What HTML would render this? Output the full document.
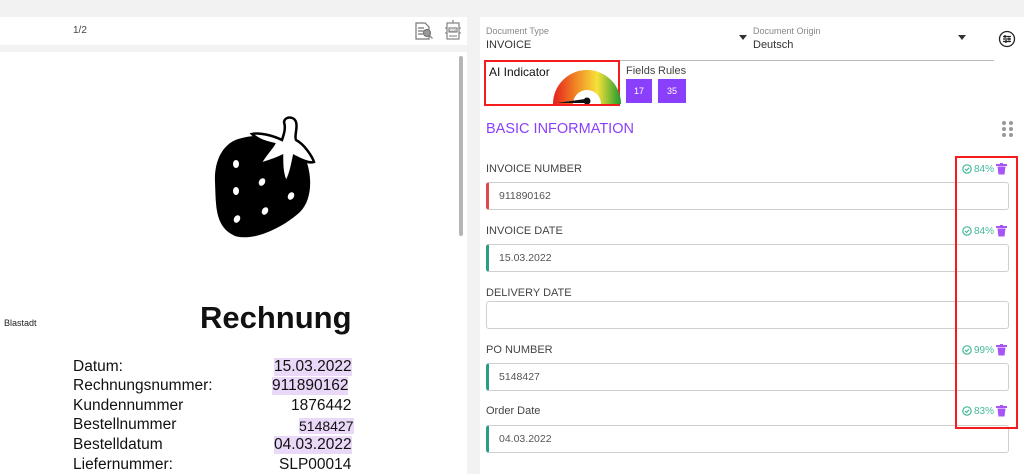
<!DOCTYPE html>
<html><head><meta charset="utf-8"><style>
*{box-sizing:border-box;margin:0;padding:0}
body{width:1024px;height:474px;overflow:hidden;background:#f2f2f2;font-family:"Liberation Sans",sans-serif;position:relative;color:#333}
.a{position:absolute}
.lbl{position:absolute;left:486px;font-size:11px;color:#444}
.inp{position:absolute;left:486px;width:523px;height:28px;border:1px solid #cfcfcf;border-radius:3px;background:#fff;font-size:10.5px;color:#555;padding:7px 10px}
.g{border-left:3px solid #2a9d84}
.r{border-left:3px solid #e0474c}
.conf{position:absolute;left:962px;font-size:10px;color:#45b89a;display:flex;align-items:center;gap:2px}
.doc{font-size:15.5px;color:#111;position:absolute}
.hl{background:#e9d8f8}
</style></head><body>
<div class="a" style="left:0;top:17px;width:467px;height:28px;background:#fff"></div>
<div class="a" style="left:73px;top:25px;font-size:10px;color:#444">1/2</div>
<svg class="a" style="left:414px;top:21px" width="20" height="20" viewBox="0 0 20 20" fill="none" stroke="#777" stroke-width="1.2"><path d="M2 2h9l4 4v12H2z"/><path d="M4 7h6M4 10h6M4 13h5"/><circle cx="13" cy="12" r="3.5" fill="#999"/><path d="M15.5 14.5l3 3"/></svg>
<svg class="a" style="left:444px;top:20px" width="18" height="22" viewBox="0 0 18 22" fill="none" stroke="#777" stroke-width="1.1"><rect x="3" y="3" width="12" height="16"/><path d="M9 0v3M1 8h2M1 13h2M15 8h2M15 13h2M5 16h8"/><rect x="5" y="8" width="8" height="4"/><text x="9" y="11.5" font-size="3" fill="#555" stroke="none" text-anchor="middle">OCR</text></svg>
<div class="a" style="left:0;top:52px;width:467px;height:422px;background:#fff"></div>
<div class="a" style="left:459px;top:56px;width:4px;height:180px;background:#b5b5b5;border-radius:2px"></div>
<svg class="a" style="left:212px;top:112px" width="112" height="128" viewBox="0 0 112 128">
<path d="M30 26C10 30 2 50 3 70c1 25 0 45 20 54 20 6 50-10 65-24 12-12 13-35 5-55C85 25 55 20 30 26z" fill="#000"/>
<path d="M40 22c8-2 22 2 30 6 2-6 4-12 2-18 1-6 10-6 12 0 2 6-2 14 0 18 8 4 16 16 18 22-6 2-16-4-20-6-2 10-4 20-8 26-4-8-4-18-4-26-8 4-16 6-22 8 4-8 12-16 14-20-8-2-16-4-22-10z" fill="#fff" stroke="#000" stroke-width="2.5"/>
<g fill="#fff"><ellipse cx="24" cy="52" rx="3" ry="4"/><ellipse cx="50" cy="70" rx="3" ry="4" transform="rotate(30 50 70)"/><ellipse cx="24" cy="79" rx="3" ry="4"/><ellipse cx="79" cy="84" rx="3" ry="4" transform="rotate(30 79 84)"/><ellipse cx="53" cy="99" rx="3" ry="4" transform="rotate(30 53 99)"/><ellipse cx="25" cy="107" rx="3" ry="4" transform="rotate(30 25 107)"/></g></svg>
<div class="a" style="left:4px;top:318px;font-size:9px;color:#222">Blastadt</div>
<div class="a" style="left:200px;top:300px;font-size:31px;font-weight:bold;color:#111">Rechnung</div>
<div class="doc" style="left:73px;top:358px">Datum:</div><div class="doc hl" style="left:274px;top:358px">15.03.2022</div>
<div class="doc" style="left:73px;top:377px">Rechnungsnummer:</div><div class="doc hl" style="left:272px;top:377px">911890162</div>
<div class="doc" style="left:73px;top:397px">Kundennummer</div><div class="doc" style="left:291px;top:397px">1876442</div>
<div class="doc" style="left:73px;top:416px">Bestellnummer</div><div class="doc hl" style="left:299px;top:416px;font-size:14px;top:418px">5148427</div>
<div class="doc" style="left:73px;top:436px">Bestelldatum</div><div class="doc hl" style="left:274px;top:436px">04.03.2022</div>
<div class="doc" style="left:73px;top:456px">Liefernummer:</div><div class="doc" style="left:279px;top:456px">SLP00014</div>

<div class="a" style="left:480px;top:17px;width:544px;height:457px;background:#fff"></div>
<div class="a" style="left:486px;top:26px;font-size:9px;color:#888">Document Type</div>
<div class="a" style="left:486px;top:39px;font-size:11px;color:#333">INVOICE</div>
<div class="a" style="left:739px;top:35px;border:4px solid transparent;border-top:5px solid #333"></div>
<div class="a" style="left:753px;top:26px;font-size:9px;color:#888">Document Origin</div>
<div class="a" style="left:753px;top:39px;font-size:11px;color:#333">Deutsch</div>
<div class="a" style="left:958px;top:35px;border:4px solid transparent;border-top:5px solid #333"></div>
<svg class="a" style="left:998px;top:30px" width="18" height="18" viewBox="0 0 18 18" fill="none" stroke="#222" stroke-width="1.3"><circle cx="9" cy="9" r="7.5"/><path d="M5 6.5h8M5 9h8M5 11.5h8M7 5v3M11 7.5v3M8 10v3"/></svg>
<div class="a" style="left:486px;top:60px;width:508px;height:1px;background:#bbb"></div>
<div class="a" style="left:484px;top:60px;width:136px;height:46px;border:2px solid #f41c1c"></div>
<div class="a" style="left:489px;top:65px;font-size:12px;color:#111">AI Indicator</div>
<svg class="a" style="left:552px;top:68px" width="70" height="36" viewBox="0 0 70 36"><defs><linearGradient id="gg" x1="0" x2="1"><stop offset="0" stop-color="#e51e1e"/><stop offset=".35" stop-color="#f08b25"/><stop offset=".65" stop-color="#f7e13a"/><stop offset="1" stop-color="#1e9a2e"/></linearGradient></defs><path d="M1 36A34 34 0 0 1 69 36H49A14 14 0 0 0 21 36Z" fill="url(#gg)"/><path d="M5 35L33 31L34 35Z" fill="#111"/><circle cx="35" cy="33" r="3.5" fill="#111"/></svg>
<div class="a" style="left:626px;top:65px;font-size:11px;color:#444">Fields</div>
<div class="a" style="left:658px;top:65px;font-size:11px;color:#444">Rules</div>
<div class="a" style="left:626px;top:79px;width:26px;height:24px;background:#8a3ffc;color:#fff;font-size:9px;text-align:center;line-height:24px">17</div>
<div class="a" style="left:658px;top:79px;width:28px;height:24px;background:#8a3ffc;color:#fff;font-size:9px;text-align:center;line-height:24px">35</div>
<div class="a" style="left:486px;top:121px;font-size:14.5px;color:#8a3ffc">BASIC INFORMATION</div>
<svg class="a" style="left:1001px;top:120px" width="14" height="18"><g fill="#999"><circle cx="3" cy="3" r="2"/><circle cx="10" cy="3" r="2"/><circle cx="3" cy="9" r="2"/><circle cx="10" cy="9" r="2"/><circle cx="3" cy="15" r="2"/><circle cx="10" cy="15" r="2"/></g></svg>

<div class="lbl" style="top:163px">INVOICE NUMBER</div>
<div class="inp r" style="top:182px">911890162</div>
<div class="lbl" style="top:225px">INVOICE DATE</div>
<div class="inp g" style="top:244px">15.03.2022</div>
<div class="lbl" style="top:287px">DELIVERY DATE</div>
<div class="inp" style="top:301px"></div>
<div class="lbl" style="top:344px">PO NUMBER</div>
<div class="inp g" style="top:363px">5148427</div>
<div class="lbl" style="top:405px">Order Date</div>
<div class="inp g" style="top:425px">04.03.2022</div>

<div class="conf" style="top:163px"><svg width="10" height="10" viewBox="0 0 10 10" fill="none" stroke="#45b89a" stroke-width="1.2"><circle cx="5" cy="5" r="4.2"/><path d="M3 5l1.5 1.5L7 3.8"/></svg>84%<svg width="11" height="12" viewBox="0 0 11 12" fill="#a855f7"><rect x="0" y="1" width="11" height="2"/><rect x="4" y="0" width="3" height="1.5"/><path d="M1.5 3.5h8l-1 8h-6z"/></svg></div>
<div class="conf" style="top:225px"><svg width="10" height="10" viewBox="0 0 10 10" fill="none" stroke="#45b89a" stroke-width="1.2"><circle cx="5" cy="5" r="4.2"/><path d="M3 5l1.5 1.5L7 3.8"/></svg>84%<svg width="11" height="12" viewBox="0 0 11 12" fill="#a855f7"><rect x="0" y="1" width="11" height="2"/><rect x="4" y="0" width="3" height="1.5"/><path d="M1.5 3.5h8l-1 8h-6z"/></svg></div>
<div class="conf" style="top:344px"><svg width="10" height="10" viewBox="0 0 10 10" fill="none" stroke="#45b89a" stroke-width="1.2"><circle cx="5" cy="5" r="4.2"/><path d="M3 5l1.5 1.5L7 3.8"/></svg>99%<svg width="11" height="12" viewBox="0 0 11 12" fill="#a855f7"><rect x="0" y="1" width="11" height="2"/><rect x="4" y="0" width="3" height="1.5"/><path d="M1.5 3.5h8l-1 8h-6z"/></svg></div>
<div class="conf" style="top:405px"><svg width="10" height="10" viewBox="0 0 10 10" fill="none" stroke="#45b89a" stroke-width="1.2"><circle cx="5" cy="5" r="4.2"/><path d="M3 5l1.5 1.5L7 3.8"/></svg>83%<svg width="11" height="12" viewBox="0 0 11 12" fill="#a855f7"><rect x="0" y="1" width="11" height="2"/><rect x="4" y="0" width="3" height="1.5"/><path d="M1.5 3.5h8l-1 8h-6z"/></svg></div>
<div class="a" style="left:955px;top:156px;width:63px;height:273px;border:2px solid #f41c1c"></div>
</body></html>
